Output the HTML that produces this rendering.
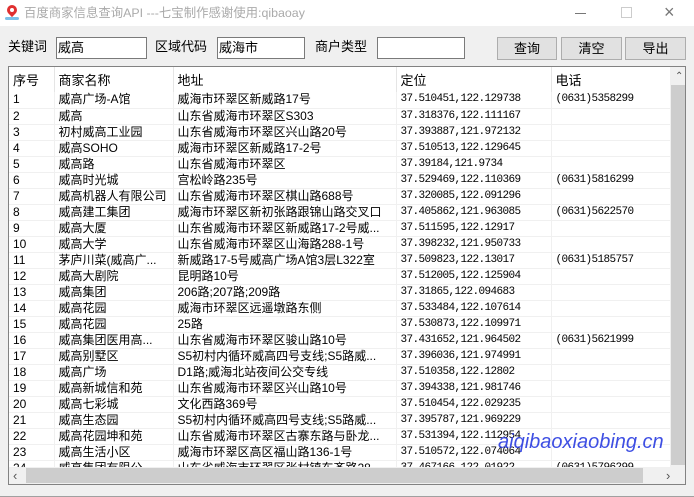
<!DOCTYPE html>
<html><head><meta charset="utf-8">
<style>
*{margin:0;padding:0;box-sizing:border-box}
body{width:694px;height:497px;background:#f0f0f0;font-family:"Liberation Sans","Noto Sans CJK SC",sans-serif;font-size:12px;color:#000;position:relative;overflow:hidden}
.abs{position:absolute}
.title{left:0;top:0;width:694px;height:26px;background:#fff}
.lbl{font-size:13px;line-height:18px}
.inp{background:#fff;border:1px solid #7a7a7a;height:22px;font-size:13px;line-height:20px;padding-left:1px}
.btn{background:#e1e1e1;border:1px solid #adadad;height:23px;text-align:center;font-size:13px;line-height:21px}
.box{left:8px;top:66px;width:678px;height:419px;border:1px solid #828282;background:#fff;overflow:hidden}
table{border-collapse:collapse;position:absolute;left:0;top:0;table-layout:fixed}
td{height:16px;line-height:15px;border-bottom:1px solid #f0f0f0;border-right:1px solid #f0f0f0;padding-left:4px;white-space:nowrap;overflow:hidden;font-size:12px}
th{height:25px;font-weight:normal;text-align:left;padding-left:4px;font-size:13px;border-right:1px solid #e5e5e5;background:#fff}
td.n{font-family:"Liberation Mono","Noto Sans CJK SC",monospace;font-size:11px;letter-spacing:-0.6px}
</style></head><body>
<div class="abs title"></div>
<div class="abs" style="left:7px;top:5px;width:10px;height:10px;border-radius:50% 50% 50% 0;transform:rotate(-45deg);background:#e03030"></div>
<div class="abs" style="left:10px;top:8px;width:4px;height:4px;border-radius:50%;background:#fff"></div>
<div class="abs" style="left:5px;top:17px;width:14px;height:3px;background:#7cc0e8;border-radius:2px"></div>
<div class="abs" style="left:24px;top:4px;font-size:12.4px;color:#aaa;line-height:18px">百度商家信息查询API ---七宝制作感谢使用:qibaoay</div>
<div class="abs" style="left:575px;top:13px;width:11px;height:1px;background:#777"></div>
<div class="abs" style="left:621px;top:7px;width:11px;height:11px;border:1px solid #ccc"></div>
<div class="abs" style="left:664px;top:1px;font-size:18px;color:#777;line-height:22px">×</div>

<div class="abs lbl" style="left:8px;top:38px">关键词</div>
<div class="abs inp" style="left:56px;top:37px;width:91px">威高</div>
<div class="abs lbl" style="left:155px;top:38px">区域代码</div>
<div class="abs inp" style="left:217px;top:37px;width:88px">威海市</div>
<div class="abs lbl" style="left:315px;top:38px">商户类型</div>
<div class="abs inp" style="left:377px;top:37px;width:88px"></div>
<div class="abs btn" style="left:497px;top:37px;width:60px">查询</div>
<div class="abs btn" style="left:561px;top:37px;width:61px">清空</div>
<div class="abs btn" style="left:625px;top:37px;width:61px">导出</div>

<div class="abs box">
<table>
<colgroup><col style="width:45px"><col style="width:119px"><col style="width:223px"><col style="width:155px"><col style="width:120px"></colgroup>
<tr><th>序号</th><th>商家名称</th><th>地址</th><th>定位</th><th>电话</th></tr>
<tr><td>1</td><td>威高广场-A馆</td><td>威海市环翠区新威路17号</td><td class="n">37.510451,122.129738</td><td class="n">(0631)5358299</td></tr>
<tr><td>2</td><td>威高</td><td>山东省威海市环翠区S303</td><td class="n">37.318376,122.111167</td><td></td></tr>
<tr><td>3</td><td>初村威高工业园</td><td>山东省威海市环翠区兴山路20号</td><td class="n">37.393887,121.972132</td><td></td></tr>
<tr><td>4</td><td>威高SOHO</td><td>威海市环翠区新威路17-2号</td><td class="n">37.510513,122.129645</td><td></td></tr>
<tr><td>5</td><td>威高路</td><td>山东省威海市环翠区</td><td class="n">37.39184,121.9734</td><td></td></tr>
<tr><td>6</td><td>威高时光城</td><td>宫松岭路235号</td><td class="n">37.529469,122.110369</td><td class="n">(0631)5816299</td></tr>
<tr><td>7</td><td>威高机器人有限公司</td><td>山东省威海市环翠区棋山路688号</td><td class="n">37.320085,122.091296</td><td></td></tr>
<tr><td>8</td><td>威高建工集团</td><td>威海市环翠区新初张路跟锦山路交叉口</td><td class="n">37.405862,121.963085</td><td class="n">(0631)5622570</td></tr>
<tr><td>9</td><td>威高大厦</td><td>山东省威海市环翠区新威路17-2号威...</td><td class="n">37.511595,122.12917</td><td></td></tr>
<tr><td>10</td><td>威高大学</td><td>山东省威海市环翠区山海路288-1号</td><td class="n">37.398232,121.950733</td><td></td></tr>
<tr><td>11</td><td>茅庐川菜(威高广...</td><td>新威路17-5号威高广场A馆3层L322室</td><td class="n">37.509823,122.13017</td><td class="n">(0631)5185757</td></tr>
<tr><td>12</td><td>威高大剧院</td><td>昆明路10号</td><td class="n">37.512005,122.125904</td><td></td></tr>
<tr><td>13</td><td>威高集团</td><td>206路;207路;209路</td><td class="n">37.31865,122.094683</td><td></td></tr>
<tr><td>14</td><td>威高花园</td><td>威海市环翠区远遥墩路东侧</td><td class="n">37.533484,122.107614</td><td></td></tr>
<tr><td>15</td><td>威高花园</td><td>25路</td><td class="n">37.530873,122.109971</td><td></td></tr>
<tr><td>16</td><td>威高集团医用高...</td><td>山东省威海市环翠区骏山路10号</td><td class="n">37.431652,121.964502</td><td class="n">(0631)5621999</td></tr>
<tr><td>17</td><td>威高别墅区</td><td>S5初村内循环威高四号支线;S5路威...</td><td class="n">37.396036,121.974991</td><td></td></tr>
<tr><td>18</td><td>威高广场</td><td>D1路;威海北站夜间公交专线</td><td class="n">37.510358,122.12802</td><td></td></tr>
<tr><td>19</td><td>威高新城信和苑</td><td>山东省威海市环翠区兴山路10号</td><td class="n">37.394338,121.981746</td><td></td></tr>
<tr><td>20</td><td>威高七彩城</td><td>文化西路369号</td><td class="n">37.510454,122.029235</td><td></td></tr>
<tr><td>21</td><td>威高生态园</td><td>S5初村内循环威高四号支线;S5路威...</td><td class="n">37.395787,121.969229</td><td></td></tr>
<tr><td>22</td><td>威高花园坤和苑</td><td>山东省威海市环翠区古寨东路与卧龙...</td><td class="n">37.531394,122.112954</td><td></td></tr>
<tr><td>23</td><td>威高生活小区</td><td>威海市环翠区高区福山路136-1号</td><td class="n">37.510572,122.074064</td><td></td></tr>
<tr><td>24</td><td>威高集团有限公</td><td>山东省威海市环翠区张村镇东齐路28</td><td class="n">37.467166,122.01922</td><td class="n">(0631)5796299</td></tr>
</table>
<div class="abs" style="left:661px;top:0;width:17px;height:400px;background:#f0f0f0"></div>
<div class="abs" style="left:666px;top:4px;font-size:10px;color:#555">⌃</div>
<div class="abs" style="left:662px;top:18px;width:15px;height:380px;background:#cdcdcd"></div>
<div class="abs" style="left:0;top:400px;width:678px;height:17px;background:#f0f0f0"></div>
<div class="abs" style="left:4px;top:400px;font-size:13px;color:#555;line-height:17px">‹</div>
<div class="abs" style="left:17px;top:401px;width:617px;height:15px;background:#cdcdcd"></div>
<div class="abs" style="left:657px;top:400px;font-size:13px;color:#555;line-height:17px">›</div>
</div>
<div class="abs" style="left:0;top:496px;width:694px;height:1px;background:#a0a0a0"></div>
<div class="abs" style="left:498px;top:430px;font-size:20px;font-style:italic;color:#2a3ce0;line-height:24px;font-family:'Liberation Sans',sans-serif;opacity:.9">aiqibaoxiaobing.cn</div>
</body></html>
